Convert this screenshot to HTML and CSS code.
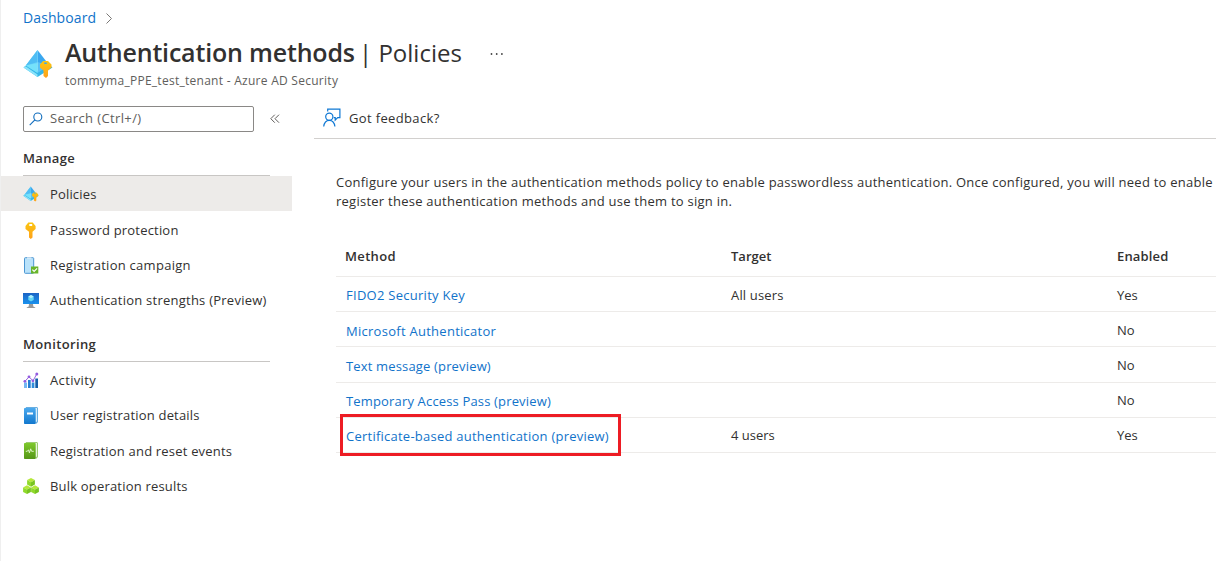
FILE: index.html
```html
<!DOCTYPE html>
<html lang="en">
<head>
<meta charset="utf-8">
<title>Authentication methods | Policies</title>
<link rel="stylesheet" href="styles.css">
</head>
<body>
<svg width="0" height="0" class="defs" aria-hidden="true">
  <defs>
    <linearGradient id="key" x1="0" y1="0" x2="0" y2="1"><stop offset="0" stop-color="#fbc510"/><stop offset="1" stop-color="#fea11b"/></linearGradient>
    <linearGradient id="screen" x1="0" y1="0" x2="0" y2="1"><stop offset="0" stop-color="#1b63c4"/><stop offset="1" stop-color="#1a92ee"/></linearGradient>
    <linearGradient id="blue" x1="0" y1="0" x2="0" y2="1"><stop offset="0" stop-color="#4ba9ee"/><stop offset="1" stop-color="#1278ce"/></linearGradient>
    <linearGradient id="green" x1="0" y1="0" x2="0" y2="1"><stop offset="0" stop-color="#7fc92c"/><stop offset="1" stop-color="#559617"/></linearGradient>
    <symbol id="policy" viewBox="0 0 30 30">
      <path fill="#35b7e8" d="M.5 18.500 4 15.500 14.500 22.500 26 15.500 29.500 18.500 14.500 28z"/>
      <path fill="#8ce4fb" d="M.5 18.500 2.500 17.200 14.500 25.500 14.500 28z"/>
      <path fill="#3aa7ef" d="M14.500 1 26.500 16.500 14.500 24z"/>
      <path fill="#68e0fa" d="M14.500 1 2.800 16.500 14.500 24z"/>
      <path fill="#4fbdf4" d="M14.500 1 14.500 14 2.800 16.500z"/>
      <path fill="#86e3fb" d="M14.500 13 2.800 16.500 14.500 24 26.500 16.500z" opacity=".45"/>
      <path fill="url(#key)" fill-rule="evenodd" d="M20 12h5l3.500 3.500v3l-3.500 3V27l-2 2-2.500-2v-5.500L17 18.500v-3zm1.200 1.600v1.500h2.600v-1.500z"/>
    </symbol>
  </defs>
</svg>
<div class="app">
  <nav class="crumbs"><a>Dashboard</a><svg width="8" height="11" viewBox="0 0 8 11"><path d="M1.500 .5 6.500 5.500 1.500 10.500" fill="none" stroke="#797775"/></svg></nav>
  <header class="head">
    <svg class="head-icon" width="30" height="30"><use href="#policy"/></svg>
    <div class="heading">
      <h1><b>Authentication methods</b><span class="leaf">| Policies</span><svg width="14" height="4" viewBox="0 0 14 4" fill="#444"><circle cx="1.500" cy="2" r=".9"/><circle cx="6.700" cy="2" r=".9"/><circle cx="11.900" cy="2" r=".9"/></svg></h1>
      <p class="sub">tommyma_PPE_test_tenant - Azure AD Security</p>
    </div>
  </header>
  <div class="body">
    <aside class="side">
      <div class="search-row">
        <div class="search"><svg width="14" height="14" viewBox="0 0 14 14" fill="none" stroke="#0f6cbd" stroke-width="1.100"><circle cx="8.800" cy="5" r="4"/><path d="M5.900 7.900.7 13.100"/></svg><span class="t-search">Search (Ctrl+/)</span></div>
        <svg class="collapse" width="10" height="10" viewBox="0 0 10 10" fill="none" stroke="#605e5c"><path d="M4.800.7.8 4.700l4 4M9 .7 5 4.700l4 4"/></svg>
      </div>
      <h2 class="t-manage">Manage</h2>
      <ul class="menu first">
        <li class="item active"><svg width="16" height="16"><use href="#policy"/></svg><span class="t-pol">Policies</span></li>
        <li class="item"><svg width="16" height="17" viewBox="0 0 16 17"><path fill="url(#key)" fill-rule="evenodd" d="M5.300.5h4.400L12.600 4v3L9.500 9.800v5.700L7.800 17 6 15.500V9.800L2.500 7V4zM6.300 2v2h2.900V2z"/></svg><span class="t-pass">Password protection</span></li>
        <li class="item"><svg width="16" height="17" viewBox="0 0 16 17"><rect x="1.500" y=".7" width="9.200" height="15.600" rx=".8" fill="#b9e2fa" stroke="#4b96d2"/><path d="M4 1h4.500" stroke="#fff"/><rect x="8" y="9.500" width="7.300" height="7" fill="#69b52b"/><path d="m9.400 12.700 1.700 1.700 3-3.100" fill="none" stroke="#fff" stroke-width="1.200"/></svg><span class="t-camp">Registration campaign</span></li>
        <li class="item"><svg width="16" height="17" viewBox="0 0 16 17"><path fill="url(#screen)" d="M0 1h16v11H0z"/><path fill="#999" d="M6 12h4l.3 2.500 2 1v.5H3.700v-.5l2-1z"/><path fill="#64d6f5" d="m8 3 2.700 1.600v3.300L8 9.500 5.300 7.900V4.600z"/><path fill="#b2effd" d="m8 3 2.700 1.600L8 6.200 5.300 4.600z"/></svg><span class="t-str">Authentication strengths (Preview)</span></li>
      </ul>
      <h2 class="second t-mon">Monitoring</h2>
      <ul class="menu">
        <li class="item"><svg width="16" height="17" viewBox="0 0 16 17"><path fill="#73b7f3" d="M1 10.500h3V16H1z"/><path fill="#267ed2" d="M5 8h2.700v8H5z"/><path fill="#2f8ddb" d="M8.700 10.500h2.700V16H8.700z"/><path fill="#145ea8" d="M12.300 6.500H15V16h-2.700z"/><path d="M1.800 9.500 6 4.800l4 4L13.800 2" fill="none" stroke="#9b65df"/><g fill="#935be0"><circle cx="1.900" cy="9.300" r="1.400"/><circle cx="6" cy="4.800" r="1.400"/><circle cx="9.900" cy="8.800" r="1.400"/><circle cx="13.800" cy="1.900" r="1.500"/></g></svg><span class="t-act">Activity</span></li>
        <li class="item"><svg width="16" height="17" viewBox="0 0 16 17"><path fill="#69aee0" d="M2.500 0H14l1 1v14l-2 2z"/><path fill="#d9effb" d="M3 1h11v13.500l-2 1z"/><rect x="1" y="1" width="11.700" height="16" rx=".8" fill="url(#blue)"/><path fill="#fff" d="M4 5.500h6v2H4z"/></svg><span class="t-user">User registration details</span></li>
        <li class="item"><svg width="16" height="17" viewBox="0 0 16 17"><path fill="#9ccc73" d="M2.500 0H14l1 1v14l-2 2z"/><path fill="#eaf5df" d="M3 1h11v13.500l-2 1z"/><rect x="1" y="1" width="11.700" height="16" rx=".8" fill="url(#green)"/><path d="M2.800 9.300h1.500l1.200-1.500.9 3 1.300-4 .9 2.500h2.200" fill="none" stroke="#e9f8d5" stroke-width=".9"/></svg><span class="t-reset">Registration and reset events</span></li>
        <li class="item"><svg width="16" height="17" viewBox="0 0 16 17"><defs><g id="cube"><path fill="#b5e83a" d="m4 0 3.900 2.100L4 4.300.1 2.100z"/><path fill="#8fd92b" d="M.1 2.100 4 4.300v4.500L.1 6.600z"/><path fill="#78c420" d="M7.900 2.100 4 4.300v4.500l3.900-2.200z"/></g></defs><use href="#cube" x="4"/><use href="#cube" y="7.300"/><use href="#cube" x="8" y="7.300"/></svg><span class="t-bulk">Bulk operation results</span></li>
      </ul>
    </aside>
    <main class="main">
      <div class="toolbar"><svg width="18" height="19" viewBox="0 0 18 19" fill="none" stroke="#0f78d4" stroke-width="1.200"><path d="M4.700 3.500V1.100h12.200v8.500h-2.200l-2.500 2.500V9.600h-1.500"/><circle cx="6.300" cy="8.700" r="3.600"/><path d="M.7 18.500c.5-4 2.600-6.200 5.600-6.200s5.100 2.200 5.600 6.200"/></svg><span class="t-feed">Got feedback?</span></div>
      <div class="intro"><div class="t-p1">Configure your users in the authentication methods policy to enable passwordless authentication. Once configured, you will need to enable</div><div class="t-p2">register these authentication methods and use them to sign in.</div></div>
      <div class="table">
        <div class="row th"><span class="t-method">Method</span><span class="t-target">Target</span><span class="t-enabled">Enabled</span></div>
        <div class="row"><a class="t-fido">FIDO2 Security Key</a><span class="t-all">All users</span><span class="t-yes">Yes</span></div>
        <div class="row"><a class="low t-ms">Microsoft Authenticator</a><span></span><span class="t-no">No</span></div>
        <div class="row tall"><a class="low t-text">Text message (preview)</a><span></span><span class="t-no">No</span></div>
        <div class="row late"><a class="low t-tap">Temporary Access Pass (preview)</a><span></span><span class="t-no">No</span></div>
        <div class="row late marked"><a class="low t-cert">Certificate-based authentication (preview)</a><span class="t-four">4 users</span><span class="t-yes">Yes</span></div>
      </div>
    </main>
  </div>
</div>
</body>
</html>
```
FILE: styles.css
```css
*, *::after { box-sizing: border-box; }
body { margin: 0; background: #fff; color: #323130; font: 13px/18px "Open Sans", "Noto Sans", sans-serif; overflow: hidden; }
h1, h2, p, ul { margin: 0; padding: 0; font-weight: 400; }
ul { list-style: none; }
a { color: #1173ca; }
svg { flex: none; display: block; }
span, a, b, p, h2, .intro div { white-space: nowrap; }
.defs { position: absolute; }
.app { width: 1216px; height: 561px; border-left: 1px solid #efefef; overflow: hidden; }
.crumbs { display: flex; align-items: center; gap: 9px; height: 36px; padding-left: 22px; font-size: 14px; letter-spacing: .1px; }
.crumbs a { margin-top: -1px; }
.head { display: flex; height: 70px; padding-left: 22px; }
.head-icon { margin-top: 13px; }
.heading { margin-left: 12px; }
h1 { display: flex; align-items: center; height: 35px; font-size: 25px; line-height: 33px; }
h1 b { font-weight: 600; width: 294px; letter-spacing: -.18px; margin-top: -2px; }
h1 svg { margin-left: 29px; }
.leaf { width: 102px; font-size: 24px; margin-top: -2px; }
.sub { font-size: 12px; line-height: 20px; color: #605e5c; letter-spacing: .27px; }
.body { display: flex; }
.side { width: 291px; flex: none; }
.search-row { display: flex; align-items: center; padding-left: 22px; }
.search { display: flex; align-items: center; width: 231px; height: 26px; border: 1px solid #8a8886; border-radius: 2px; padding-left: 5px; gap: 7px; color: #605e5c; }
.search span { margin-top: -2px; }
.collapse { margin-left: 16px; }
h2 { margin: 17px 22px 0; height: 27px; border-bottom: 1px solid #c8c6c4; font-size: 13px; line-height: 18px; font-weight: 600; }
h2.second { margin-top: 18px; }
.item { display: flex; align-items: center; gap: 11px; height: 35.300px; padding: 1px 0 0 22px; }
.first .item { height: 35px; }
.first .active { background: #edebe9; margin-bottom: 1px; }
.main { flex: 1; min-width: 0; padding-left: 22px; }
.toolbar { display: flex; align-items: center; gap: 8px; height: 33px; padding: 0 0 9px 9px; border-bottom: 1px solid #d2d0ce; }
.intro { margin: 34px 0 0 22px; line-height: 19px; }
.table { margin: 26px 0 0 22px; }
.row { display: grid; grid-template-columns: 385px 386px 1fr; align-items: center; height: 35px; padding: 1px 0 0 10px; border-bottom: 1px solid #edebe9; }
.th { height: 40px; padding: 0 0 1px 9px; font-weight: 600; grid-template-columns: 386px 386px 1fr; }
.tall { height: 36px; }
.late { padding: 0 0 1px 10px; }
.low { position: relative; top: 1px; }
.marked { position: relative; }
.marked::after { content: ""; position: absolute; left: 4px; top: -4px; width: 281px; height: 42px; border: 3px solid #ed1c24; }

/* Tracking per label */
.t-search { letter-spacing: .38px; }
.t-manage, .t-method { letter-spacing: .33px; }
.t-mon, .t-act, .t-feed { letter-spacing: .35px; }
.t-pol, .t-enabled, .t-all, .t-text, .t-tap { letter-spacing: .16px; }
.t-pass, .t-user, .t-reset, .t-bulk { letter-spacing: .19px; }
.t-camp, .t-ms, .t-fido { letter-spacing: .27px; }
.t-str, .t-cert { letter-spacing: .24px; }
.t-p1, .t-p2 { letter-spacing: .253px; }
```
